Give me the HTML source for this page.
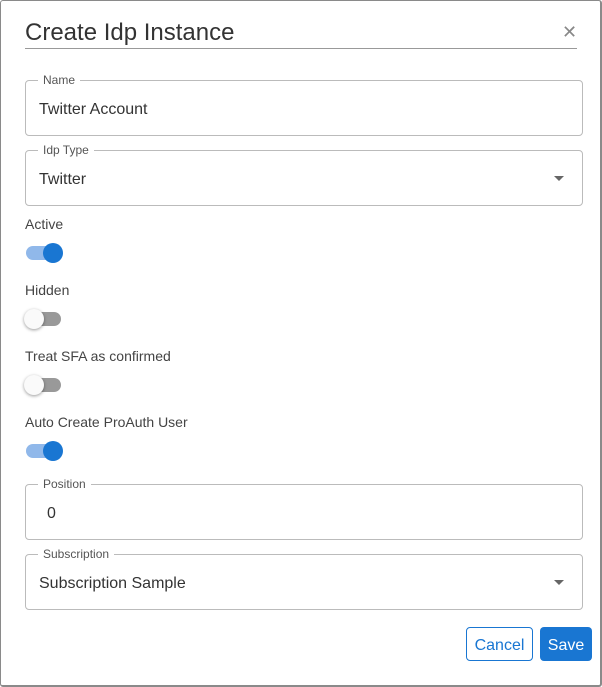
<!DOCTYPE html>
<html><head><style>
body{margin:0;width:602px;height:687px;background:#fff;font-family:"Liberation Sans",sans-serif;overflow:hidden;position:relative}
.frame{position:absolute;left:0;top:0;width:599px;height:684px;border:1px solid #8a8a8a;border-right-width:2px;border-bottom-width:2px;border-radius:3px}
.a{position:absolute}
.title{left:25px;top:19px;font-size:24px;color:#333}
.hr{left:25px;top:48px;width:552px;height:1px;background:#999}
.x{left:562px;top:22px;font-size:18px;color:#888}
.box{position:absolute;left:25px;width:556px;height:54px;border:1px solid #bbb;border-radius:4px}
.box .l{position:absolute;left:12px;top:-8px;background:#fff;padding:0 5px;font-size:12px;color:#555}
.box .v{position:absolute;left:13px;top:20px;font-size:16px;color:#333}
.arr{position:absolute;right:18px;top:25px;width:0;height:0;border-left:5px solid transparent;border-right:5px solid transparent;border-top:5px solid #666}
.lab{position:absolute;left:25px;font-size:14px;color:#444}
.tr{position:absolute;left:26px;width:35px;height:14px;border-radius:7px}
.on{background:#90b8ea}.off{background:#999}
.th{position:absolute;top:-3px;width:20px;height:20px;border-radius:50%}
.on .th{left:17px;background:#1976d2}
.off .th{left:-2px;background:#fafafa;box-shadow:0 1px 3px rgba(0,0,0,.4)}
.btn{position:absolute;top:627px;height:32px;border-radius:4px;font-size:16px;line-height:36px;text-align:center}
</style></head><body>
<div class="frame"></div>
<div class="a title">Create Idp Instance</div>
<div class="a hr"></div>
<div class="a x">✕</div>
<div class="box" style="top:80px"><span class="l">Name</span><span class="v">Twitter Account</span></div>
<div class="box" style="top:150px"><span class="l">Idp Type</span><span class="v">Twitter</span><i class="arr"></i></div>
<div class="lab" style="top:216px">Active</div>
<div class="tr on" style="top:246px"><i class="th"></i></div>
<div class="lab" style="top:282px">Hidden</div>
<div class="tr off" style="top:312px"><i class="th"></i></div>
<div class="lab" style="top:348px">Treat SFA as confirmed</div>
<div class="tr off" style="top:378px"><i class="th"></i></div>
<div class="lab" style="top:414px">Auto Create ProAuth User</div>
<div class="tr on" style="top:444px"><i class="th"></i></div>
<div class="box" style="top:484px"><span class="l">Position</span><span class="v" style="left:21px">0</span></div>
<div class="box" style="top:554px"><span class="l">Subscription</span><span class="v">Subscription Sample</span><i class="arr"></i></div>
<div class="btn" style="left:466px;width:65px;border:1px solid #1976d2;color:#1976d2;background:#fff">Cancel</div>
<div class="btn" style="left:540px;width:52px;height:34px;line-height:38px;background:#1976d2;color:#fff">Save</div>
</body></html>
